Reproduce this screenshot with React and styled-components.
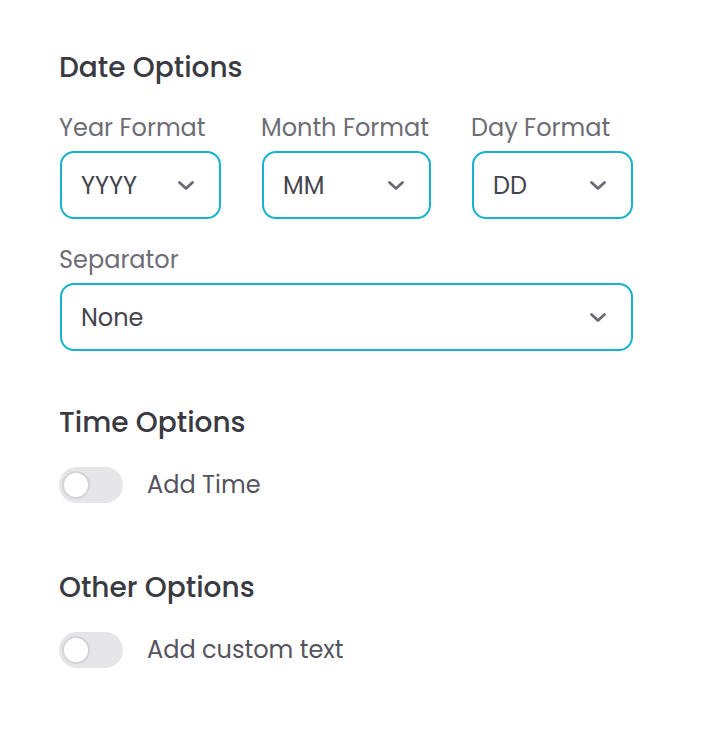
import React, { useState } from "react";
import styled, { createGlobalStyle } from "styled-components";

const GlobalStyle = createGlobalStyle`
  html, body {
    margin: 0;
    padding: 0;
    background: #ffffff;
  }
  body {
    font-family: "Poppins", "Open Sans", "Liberation Sans", sans-serif;
    -webkit-font-smoothing: antialiased;
  }
`;

const Panel = styled.div`
  padding: 51px 0 40px 60px;
  width: 573px;
`;

const Heading = styled.h2`
  margin: ${(p) => p.$top || 0}px 0 0 -1px;
  font-size: 28px;
  line-height: 34px;
  font-weight: 500;
  color: #3a3a42;
`;

const FormatGrid = styled.div`
  display: grid;
  grid-template-columns: 161px 169px 161px;
  column-gap: 41px;
  margin-top: 29px;
`;

const Field = styled.div`
  display: flex;
  flex-direction: column;
  margin-top: ${(p) => p.$top || 0}px;
`;

const Label = styled.label`
  margin: 0 0 9px -1px;
  font-size: 24px;
  line-height: 28px;
  color: #6e6d77;
  white-space: nowrap;
`;

const SelectBox = styled.button`
  box-sizing: border-box;
  display: flex;
  align-items: center;
  justify-content: space-between;
  width: 100%;
  height: 68px;
  padding: 0 24px 0 19px;
  border: 2px solid #16b2cf;
  border-radius: 14px;
  background: #fff;
  font-family: inherit;
  font-size: 24px;
  color: #44444d;
  cursor: pointer;
`;

const Chevron = styled.svg`
  width: 18px;
  height: 11px;
  flex-shrink: 0;
`;

const ToggleRow = styled.div`
  display: flex;
  align-items: center;
  gap: 24px;
  margin: 27px 0 0 -1px;
`;

const Track = styled.span`
  position: relative;
  display: inline-block;
  width: 64px;
  height: 36px;
  border-radius: 18px;
  background: ${(p) => (p.$on ? "#16b2cf" : "#e6e6e9")};
  cursor: pointer;
  flex-shrink: 0;
`;

const Knob = styled.span`
  position: absolute;
  top: 4px;
  left: ${(p) => (p.$on ? "32px" : "3px")};
  width: 28px;
  height: 28px;
  box-sizing: border-box;
  border-radius: 50%;
  background: #ffffff;
  border: 2px solid #d4d4d8;
`;

const ToggleText = styled.span`
  font-size: 24px;
  line-height: 28px;
  color: #55545e;
`;

function Select({ value }) {
  return (
    <SelectBox type="button">
      <span>{value}</span>
      <Chevron viewBox="0 0 18 11" fill="none">
        <path
          d="M2.5 2.5 L9 8.5 L15.5 2.5"
          stroke="#6b6a74"
          strokeWidth="2.8"
          strokeLinecap="round"
          strokeLinejoin="round"
        />
      </Chevron>
    </SelectBox>
  );
}

function Toggle({ label }) {
  const [on, setOn] = useState(false);
  return (
    <ToggleRow>
      <Track $on={on} onClick={() => setOn(!on)}>
        <Knob $on={on} />
      </Track>
      <ToggleText>{label}</ToggleText>
    </ToggleRow>
  );
}

export default function App() {
  return (
    <>
      <GlobalStyle />
      <Panel>
        <Heading>Date Options</Heading>
        <FormatGrid>
          <Field>
            <Label>Year Format</Label>
            <Select value="YYYY" />
          </Field>
          <Field>
            <Label>Month Format</Label>
            <Select value="MM" />
          </Field>
          <Field>
            <Label>Day Format</Label>
            <Select value="DD" />
          </Field>
        </FormatGrid>
        <Field $top={27}>
          <Label>Separator</Label>
          <Select value="None" />
        </Field>

        <Heading $top={55}>Time Options</Heading>
        <Toggle label="Add Time" />

        <Heading $top={68}>Other Options</Heading>
        <Toggle label="Add custom text" />
      </Panel>
    </>
  );
}
